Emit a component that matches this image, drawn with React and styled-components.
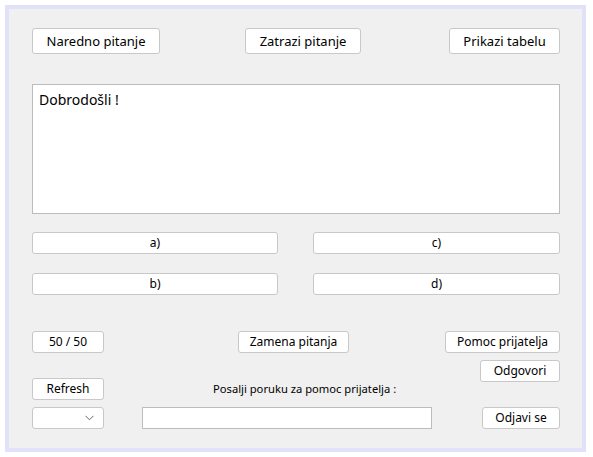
import React from "react";
import styled, { createGlobalStyle } from "styled-components";

const Global = createGlobalStyle`
  html, body { margin: 0; padding: 0; background: #ffffff; }
  body { font-family: "Noto Sans", "Open Sans", sans-serif; }
  * { box-sizing: border-box; }
`;

const Window = styled.div`
  margin: 5px 0 0 5px;
  width: 581px;
  height: 447px;
  border: 4px solid #e1e1fa;
  background: #f0f0f0;
  padding: 19px 22px 0 23px;
  display: flex;
  flex-direction: column;
`;

const TopRow = styled.div`
  display: flex;
  height: 26px;
`;

const Button = styled.button`
  font-family: "Noto Sans", "Open Sans", sans-serif;
  font-size: ${(p) => p.$fs || 12}px;
  color: #000;
  background: #ffffff;
  border: 1px solid #c8c8c8;
  border-radius: 3px;
  padding: 0;
  margin: 0;
  margin-left: ${(p) => (p.$ml === "auto" ? "auto" : `${p.$ml || 0}px`)};
  width: ${(p) => p.$w}px;
  height: ${(p) => p.$h || 22}px;
  line-height: 1;
  display: flex;
  align-items: center;
  justify-content: center;
  flex: none;
`;

const Display = styled.div`
  margin-top: 30px;
  height: 130px;
  background: #ffffff;
  border: 1px solid #bcbcbc;
  padding: 5px 6px;
  font-size: 14px;
  color: #000;
`;

const Answers = styled.div`
  margin-top: 18px;
  display: grid;
  grid-template-columns: 246px 247px;
  column-gap: 35px;
  row-gap: 19px;
`;

const Bottom = styled.div`
  margin-top: 36px;
  display: grid;
  grid-template-columns: 72px 38px 290px 13px 115px;
`;

const Column = styled.div`
  display: flex;
  flex-direction: column;
  align-items: ${(p) => p.$align || "flex-start"};
`;

const Gap = styled.div`
  height: ${(p) => p.$h}px;
  flex: none;
`;

const Label = styled.div`
  font-size: 11.2px;
  color: #000;
  height: 22px;
  line-height: 22px;
  margin-left: 71px;
  white-space: nowrap;
`;

const Combo = styled.div`
  width: 72px;
  height: 22px;
  background: #fff;
  border: 1px solid #c8c8c8;
  border-radius: 3px;
  display: flex;
  align-items: center;
  justify-content: flex-end;
  padding-right: 9px;
`;

const TextInput = styled.input`
  width: 290px;
  height: 22px;
  background: #fff;
  border: 1px solid #bcbcbc;
  margin: 0;
  padding: 0 4px;
  outline: none;
`;

const Chevron = () => (
  <svg width="9" height="6" viewBox="0 0 9 6">
    <path d="M0.5 0.8 L4.5 4.8 L8.5 0.8" fill="none" stroke="#666" strokeWidth="1" />
  </svg>
);

export default function App() {
  return (
    <>
      <Global />
      <Window>
        <TopRow>
          <Button $w={128} $h={26} $fs={13}>Naredno pitanje</Button>
          <Button $w={116} $h={26} $fs={13} $ml={85}>Zatrazi pitanje</Button>
          <Button $w={111} $h={26} $fs={13} $ml="auto">Prikazi tabelu</Button>
        </TopRow>
        <Display>Dobrodošli !</Display>
        <Answers>
          <Button $w={246}>a)</Button>
          <Button $w={247}>c)</Button>
          <Button $w={246}>b)</Button>
          <Button $w={247}>d)</Button>
        </Answers>
        <Bottom>
          <Column>
            <Button $w={72}>50 / 50</Button>
            <Gap $h={25} />
            <Button $w={72}>Refresh</Button>
            <Gap $h={7} />
            <Combo>
              <Chevron />
            </Combo>
          </Column>
          <div />
          <Column>
            <Button $w={111} $ml={96}>Zamena pitanja</Button>
            <Gap $h={25} />
            <Label>Posalji poruku za pomoc prijatelja :</Label>
            <Gap $h={7} />
            <TextInput />
          </Column>
          <div />
          <Column $align="flex-end">
            <Button $w={115}>Pomoc prijatelja</Button>
            <Gap $h={7} />
            <Button $w={80}>Odgovori</Button>
            <Gap $h={25} />
            <Button $w={78}>Odjavi se</Button>
          </Column>
        </Bottom>
      </Window>
    </>
  );
}
